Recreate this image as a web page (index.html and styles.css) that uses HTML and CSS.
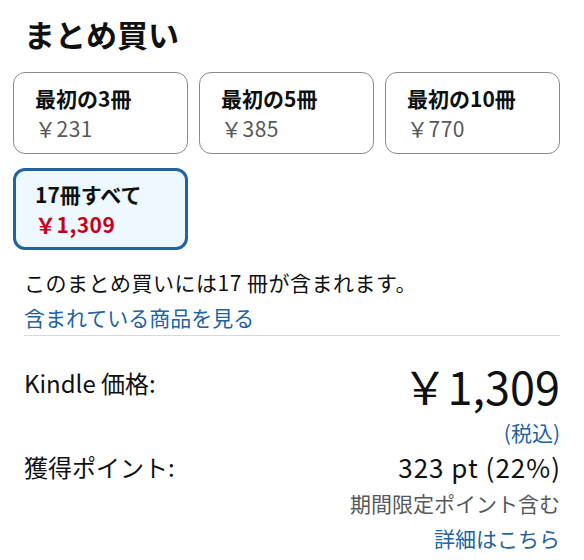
FILE: index.html
```html
<!DOCTYPE html>
<html lang="ja">
<head>
<meta charset="utf-8">
<link rel="stylesheet" href="styles.css">
</head>
<body>
<div class="wrap">
  <h2 class="title">まとめ買い</h2>
  <div class="cards">
    <div class="card">
      <div class="card-name">最初の3冊</div>
      <div class="card-price">￥231</div>
    </div>
    <div class="card">
      <div class="card-name">最初の5冊</div>
      <div class="card-price">￥385</div>
    </div>
    <div class="card">
      <div class="card-name">最初の10冊</div>
      <div class="card-price">￥770</div>
    </div>
    <div class="card selected">
      <div class="card-name">17冊すべて</div>
      <div class="card-price red">￥1,309</div>
    </div>
  </div>
  <div class="info">
    <p class="desc">このまとめ買いには17 冊が含まれます。</p>
    <a class="link">含まれている商品を見る</a>
  </div>
  <div class="prices">
    <div class="row">
      <span class="label">Kindle 価格:</span>
      <span class="big">￥1,309</span>
    </div>
    <div class="sub tax link">(税込)</div>
    <div class="row">
      <span class="label">獲得ポイント:</span>
      <span class="pts">323 pt (22%)</span>
    </div>
    <div class="sub gray">期間限定ポイント含む</div>
    <div class="sub link">詳細はこちら</div>
  </div>
</div>
</body>
</html>
```

FILE: styles.css
```css
* { box-sizing: border-box; }
body {
  margin: 0;
  background: #fff;
  font-family: "Noto Sans CJK JP", "Noto Sans", sans-serif;
  color: #0f1111;
}
.wrap {
  width: 547px;
  margin-left: 13px;
  padding-top: 14px;
}
.title {
  margin: 0 0 0 11px;
  font-size: 31px;
  line-height: 40px;
  font-weight: 700;
}
.cards {
  margin-top: 18px;
  display: grid;
  grid-template-columns: repeat(3, 1fr);
  column-gap: 11px;
  row-gap: 14px;
}
.card {
  height: 82px;
  border: 1px solid #888c8c;
  border-radius: 12px;
  padding: 10px 0 0 21px;
}
.card.selected {
  border: 3px solid #2162a1;
  background: #edf8ff;
  padding: 8px 0 0 19px;
}
.card-name {
  font-size: 21px;
  font-weight: 700;
  line-height: 30px;
}
.card-price {
  font-size: 21px;
  line-height: 30px;
  color: #565959;
  letter-spacing: 0.5px;
}
.card-price.red {
  color: #c7001a;
  font-weight: 700;
}
.info {
  margin: 14px 0 0 11px;
  border-bottom: 1px solid #d5d9d9;
}
.desc {
  margin: 0;
  font-size: 21px;
  line-height: 36px;
  letter-spacing: 0.5px;
}
.link {
  color: #2162a1;
  font-size: 21px;
  line-height: 35px;
  display: block;
}
.prices {
  margin: 23px 0 0 11px;
}
.row {
  display: flex;
  justify-content: space-between;
  align-items: flex-start;
}
.label {
  font-size: 24px;
  line-height: 34px;
  padding-top: 7px;
}
.big {
  font-size: 45px;
  line-height: 53px;
  font-weight: 400;
}
.row + .sub + .row .label {
  padding-top: 2px;
}
.pts {
  font-size: 26px;
  line-height: 38px;
  letter-spacing: 1px;
  margin-right: -1px;
}
.sub {
  text-align: right;
  font-size: 21px;
  line-height: 35px;
}
.tax {
  padding-top: 4px;
  line-height: 32px;
}
.gray { color: #565959; }
```
